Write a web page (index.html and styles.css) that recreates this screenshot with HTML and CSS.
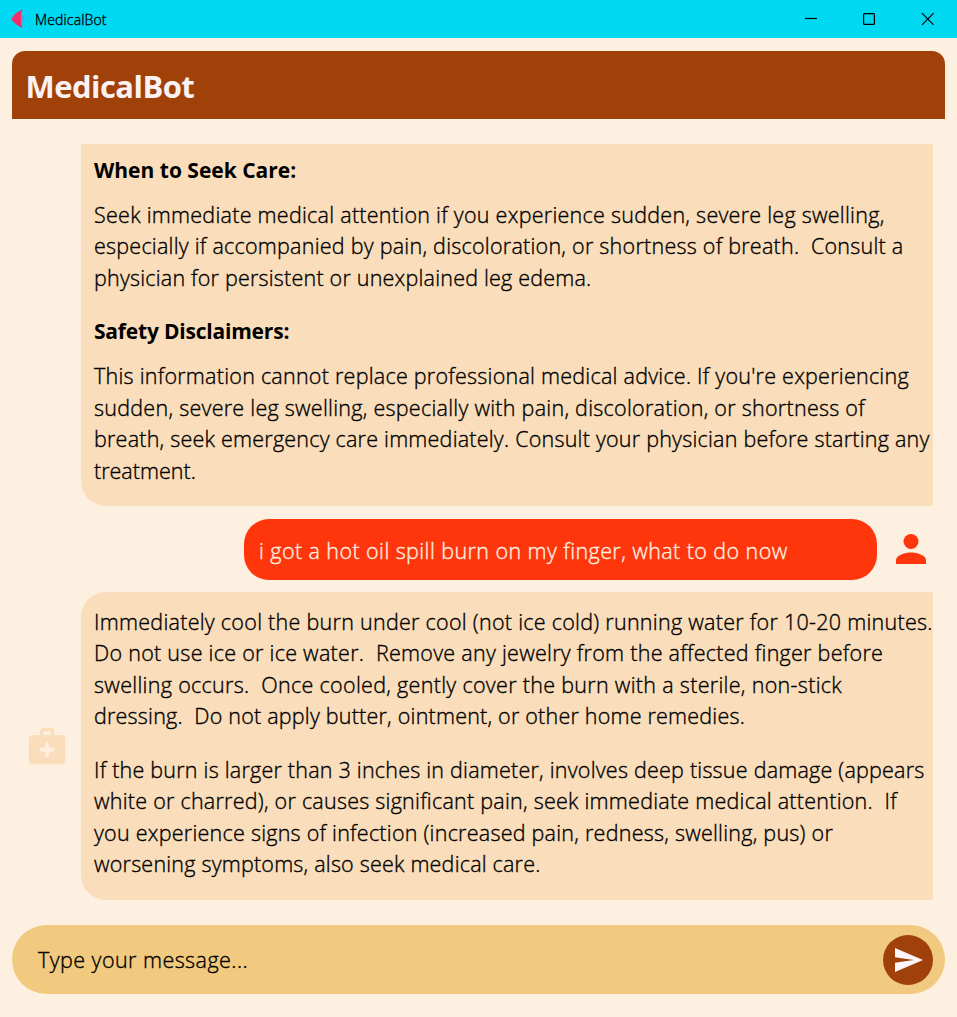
FILE: index.html
```html
<!DOCTYPE html>
<html lang="en">
<head>
<meta charset="utf-8">
<title>MedicalBot</title>
<link rel="stylesheet" href="styles.css">
</head>
<body>
<div class="titlebar">
  <svg class="app-icon" width="16" height="20" viewBox="0 0 16 20"><path d="M10.500 5.500L13.500 7V12L10.500 14Z" fill="#3fa9f0"/><path d="M.5 10 C1 7.500 6 2.500 11.500 .5 C9.500 5 9.500 13.500 11.500 19 C6 16.500 1 12.500 .5 10Z" fill="#f0306c"/></svg>
  <span class="window-name">MedicalBot</span>
  <svg class="controls" width="132" height="14" viewBox="0 0 132 14" fill="none" stroke="#000" stroke-width="1.200"><path d="M0 6.500H12"/><rect x="58.600" y="1.600" width="10.800" height="10.800" rx="1"/><path d="M117 1.200L128.600 12.800M128.600 1.200L117 12.800"/></svg>
</div>
<main class="app">
  <header class="banner"><h1>MedicalBot</h1></header>
  <section class="chat">
    <div class="row row-first">
      <div class="bubble bot clipped">
        <h2>When to Seek Care:</h2>
        <p><span class="line a1">Seek immediate medical attention if you experience sudden, severe leg swelling,</span><span class="line a2">especially if accompanied by pain, discoloration, or shortness of breath.  Consult a</span><span class="line a3">physician for persistent or unexplained leg edema.</span></p>
        <h2 class="second">Safety Disclaimers:</h2>
        <p><span class="line b1">This information cannot replace professional medical advice. If you're experiencing</span><span class="line b2">sudden, severe leg swelling, especially with pain, discoloration, or shortness of</span><span class="line b3">breath, seek emergency care immediately. Consult your physician before starting any</span><span class="line b4">treatment.</span></p>
      </div>
    </div>
    <div class="row row-user">
      <div class="bubble user"><span class="line u1">i got a hot oil spill burn on my finger, what to do now</span></div>
      <svg class="person" width="30" height="30" viewBox="0 0 30 30" fill="#ff360c"><circle cx="15" cy="7.500" r="7.500"/><path d="M0 30V26C0 21 9.500 18.500 15 18.500S30 21 30 26V30Z"/></svg>
    </div>
    <div class="row row-bot">
      <svg class="kit" width="44" height="44" viewBox="0 0 24 24" fill="#faddba"><path fill-rule="evenodd" d="M20 6h-4V4c0-1.100-.9-2-2-2h-4c-1.100 0-2 .9-2 2v2H4c-1.100 0-2 .9-2 2v12c0 1.100.9 2 2 2h16c1.100 0 2-.9 2-2V8c0-1.100-.9-2-2-2zM10 4h4v2h-4V4zm6 11h-3v3h-2v-3H8v-2h3v-3h2v3h3v2z"/></svg>
      <div class="bubble bot">
        <p><span class="line c1">Immediately cool the burn under cool (not ice cold) running water for 10-20 minutes.</span><span class="line c2">Do not use ice or ice water.  Remove any jewelry from the affected finger before</span><span class="line c3">swelling occurs.  Once cooled, gently cover the burn with a sterile, non-stick</span><span class="line c4">dressing.  Do not apply butter, ointment, or other home remedies.</span></p>
        <p class="next"><span class="line d1">If the burn is larger than 3 inches in diameter, involves deep tissue damage (appears</span><span class="line d2">white or charred), or causes significant pain, seek immediate medical attention.  If</span><span class="line d3">you experience signs of infection (increased pain, redness, swelling, pus) or</span><span class="line d4">worsening symptoms, also seek medical care.</span></p>
      </div>
    </div>
  </section>
  <footer class="composer">
    <span class="placeholder">Type your message...</span>
    <span class="send"><svg width="28" height="24" viewBox="0 0 28 24"><path d="M0 0L28 12L0 24V14.700L19 12L0 9.300Z" fill="#fdf7fa"/></svg></span>
  </footer>
</main>
</body>
</html>
```
FILE: styles.css
```css
* { box-sizing: border-box; }
body {
  margin: 0;
  height: 1017px;
  display: flex;
  flex-direction: column;
  overflow: hidden;
  background: #fef0e0;
  color: #000;
  font-family: "Open Sans", "Noto Sans", sans-serif;
  font-size: 21.500px;
}
h1, h2, p { margin: 0; }
svg { display: block; flex: none; }
.titlebar {
  flex: none;
  height: 38px;
  padding: 0 20px 0 11px;
  display: flex;
  align-items: center;
  background: #00d9f2;
}
.window-name { margin-left: 8px; font-size: 14px; padding-top: 1px; letter-spacing: .15px; }
.controls { margin-left: auto; }
.app {
  flex: 1;
  padding: 12.500px 12px 23.500px 12px;
  display: flex;
  flex-direction: column;
}
.banner {
  height: 68.700px;
  padding: 4px 13px 0 13.500px;
  display: flex;
  align-items: center;
  background: #a0410a;
  border-radius: 13px 13px 0 0;
}
h1 { font-size: 31px; line-height: 1; color: #f9f1f2; letter-spacing: -.55px; }
.chat { padding: 24.800px 12px 0 16px; }
.row { display: flex; }
.row-first { padding-left: 53px; }
.bubble.bot {
  flex: 1;
  min-width: 0;
  padding: 13.500px 0 20px 13px;
  background: #faddba;
  border-radius: 25px 2px 2px 25px;
}
.bubble.clipped { height: 362px; padding-top: 11px; border-radius: 0 0 2px 25px; }
.line, .placeholder, .window-name {
  font-weight: 300;
  -webkit-text-stroke: .35px currentColor;
}
.line { display: block; white-space: pre; line-height: 31.500px; }
h2 { font-size: 21px; line-height: 31px; margin-bottom: 13px; }
h2.second { margin-top: 23px; letter-spacing: -.2px; }
.next { margin-top: 22px; }
.row-user { padding: 13px 7px 12.500px 0; justify-content: flex-end; align-items: center; }
.bubble.user {
  width: 633px;
  height: 61px;
  padding: 16.500px 15px 0;
  background: #ff360c;
  border-radius: 25px;
  color: #fef0e0;
}
.person { margin-left: 19px; }
.row-bot { align-items: center; }
.kit { margin: 0 12px 0 -3px; }
.composer {
  margin-top: auto;
  height: 69px;
  padding: 1px 12px 0 26px;
  display: flex;
  align-items: center;
  justify-content: space-between;
  background: #f1ca7f;
  border-radius: 35px;
}
.placeholder { letter-spacing: .45px; }
.send {
  width: 50px;
  height: 50px;
  padding-left: 1px;
  display: flex;
  align-items: center;
  justify-content: center;
  border-radius: 50%;
  background: #a0410a;
}
.a1, .b2 { letter-spacing: .265px; }
.a2, .b1, .d2, .d3 { letter-spacing: .245px; }
.a3, .c4, .d4 { letter-spacing: .21px; }
.b3, .d1 { letter-spacing: .225px; }
.c1, .c2 { letter-spacing: .275px; }
.c3 { letter-spacing: .305px; }
.u1 { letter-spacing: .42px; }
```
